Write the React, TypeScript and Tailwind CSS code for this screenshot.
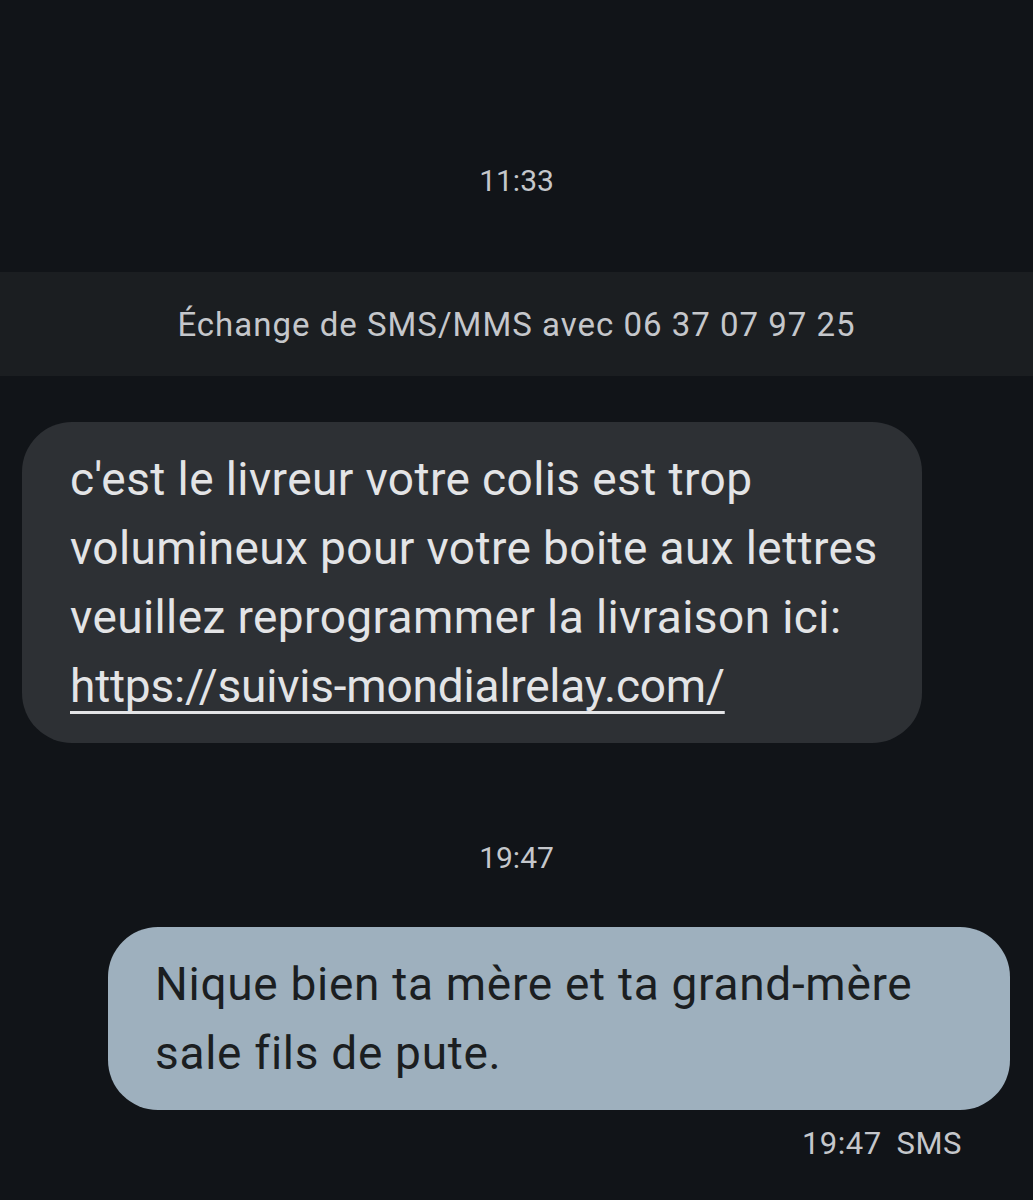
export default function App() {
  return (
    <div className="min-h-[1200px] w-[1033px] bg-[#111418] font-['Roboto',sans-serif] overflow-hidden">
      <div className="h-[272px] flex items-end justify-center pb-[76px]">
        <span className="text-[30px] leading-none text-[#c5c7cb]">11:33</span>
      </div>

      <div className="h-[104px] bg-[#1b1e21] flex items-center justify-center">
        <span className="text-[33px] leading-none text-[#c5c7cb] tracking-[1px]">
          Échange de SMS/MMS avec 06 37 07 97 25
        </span>
      </div>

      <div className="pt-[46px] pl-[22px]">
        <div className="w-[900px] h-[321px] rounded-[50px] bg-[#2d3034] pl-[48px] pt-[23px]">
          <p className="text-[46px] leading-[69px] text-[#e3e4e6] tracking-[0.4px]">
            c'est le livreur votre colis est trop
            <br />
            volumineux pour votre boite aux lettres
            <br />
            veuillez reprogrammer la livraison ici:
            <br />
            <span className="underline decoration-[3px] underline-offset-[9px] [text-decoration-skip-ink:none] tracking-[-0.2px]">
              https://suivis-mondialrelay.com/
            </span>
          </p>
        </div>
      </div>

      <div className="h-[184px] flex items-center justify-center pt-[46px]">
        <span className="text-[30px] leading-none text-[#c5c7cb]">19:47</span>
      </div>

      <div className="flex justify-end pr-[23px]">
        <div className="w-[902px] h-[183px] rounded-[50px] bg-[#9eb0be] pl-[47px] pt-[23px]">
          <p className="text-[46px] leading-[69px] text-[#1b1e21] tracking-[0.7px]">
            Nique bien ta mère et ta grand-mère
            <br />
            sale fils de pute.
          </p>
        </div>
      </div>

      <div className="flex justify-end pr-[71px] pt-[18px]">
        <span className="text-[31px] leading-none text-[#c5c7cb] flex gap-[15px] tracking-[0.5px]">
          <span>19:47</span>
          <span>SMS</span>
        </span>
      </div>
    </div>
  );
}
